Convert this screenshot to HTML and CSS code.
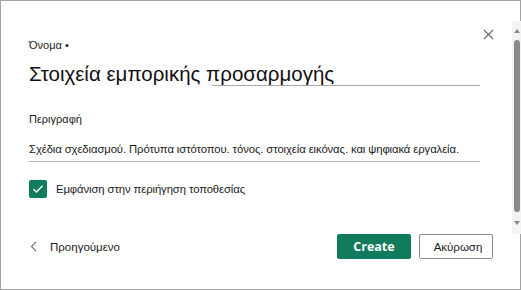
FILE: index.html
```html
<!DOCTYPE html>
<html lang="el">
<head>
  <meta charset="UTF-8">
  <meta name="viewport" content="width=device-width, initial-scale=1.0">
  <title>Στοιχεία εμπορικής προσαρμογής</title>
  <link rel="stylesheet" href="styles.css">
</head>
<body>
  <div class="dialog">
    <!-- Close button -->
    <button class="close" aria-label="Κλείσιμο">
      <svg width="11" height="11" viewBox="0 0 11 11"><path d="M1 1 L10 10 M10 1 L1 10" stroke="#6b6b6b" stroke-width="1.2" fill="none"/></svg>
    </button>

    <!-- Scrollbar -->
    <div class="scrollbar">
      <span class="arrow up"></span>
      <span class="thumb"></span>
      <span class="arrow down"></span>
    </div>

    <div class="content">
      <label class="label">Όνομα •</label>
      <div class="title-field">Στοιχεία εμπορικής προσαρμογής</div>

      <label class="label desc-label">Περιγραφή</label>
      <div class="desc-field">Σχέδια σχεδιασμού. Πρότυπα ιστότοπου. τόνος. στοιχεία εικόνας. και ψηφιακά εργαλεία.</div>

      <div class="check-row">
        <span class="checkbox">
          <svg width="12" height="10" viewBox="0 0 12 10"><path d="M1.5 5.2 L4.5 8 L10.5 1.8" stroke="#fff" stroke-width="1.4" fill="none"/></svg>
        </span>
        <span>Εμφάνιση στην περιήγηση τοποθεσίας</span>
      </div>
    </div>

    <!-- Footer -->
    <div class="footer">
      <a class="back">
        <svg width="8" height="11" viewBox="0 0 8 11"><path d="M6 0.8 L1.5 5.5 L6 10.2" stroke="#6b6b6b" stroke-width="1.1" fill="none"/></svg>
        <span>Προηγούμενο</span>
      </a>
      <div class="actions">
        <button class="btn primary">Create</button>
        <button class="btn secondary">Ακύρωση</button>
      </div>
    </div>
  </div>
</body>
</html>
```

FILE: styles.css
```css
body {
  margin: 0;
  padding: 0;
  background-color: #fff;
  font-family: "Liberation Sans", Arial, sans-serif;
  color: #1b1b1b;
}
.dialog {
  position: relative;
  width: 521px;
  height: 290px;
  box-sizing: border-box;
  border: 1px solid #a3a3a3;
  display: flex;
  flex-direction: column;
}
.close {
  position: absolute;
  top: 27px;
  left: 481px;
  padding: 0;
  border: none;
  background: none;
  width: 13px;
  height: 13px;
  display: flex;
  align-items: center;
  justify-content: center;
}
.scrollbar {
  position: absolute;
  top: 20px;
  left: 511px;
  width: 9px;
  height: 213px;
  background-color: #f3f3f3;
  display: flex;
  flex-direction: column;
  align-items: center;
}
.arrow {
  width: 0;
  height: 0;
  border-left: 3.5px solid transparent;
  border-right: 3.5px solid transparent;
}
.arrow.up {
  margin-top: 8px;
  border-bottom: 4px solid #8a8a8a;
}
.arrow.down {
  margin-top: 9px;
  border-top: 4px solid #8a8a8a;
}
.thumb {
  margin-top: 7px;
  width: 6px;
  height: 172px;
  border-radius: 3px;
  background-color: #8a8a8a;
}
.content {
  padding: 37px 40px 0 28px;
  display: flex;
  flex-direction: column;
}
.label {
  font-size: 11px;
  line-height: 15px;
  color: #222;
}
.title-field {
  margin-top: 8px;
  font-size: 20.5px;
  line-height: 25px;
  color: #111;
  background-image: linear-gradient(to right, transparent 183px, #a9a9a9 183px);
  background-size: 100% 1px;
  background-position: bottom;
  background-repeat: no-repeat;
}
.desc-label {
  margin-top: 26px;
}
.desc-field {
  margin-top: 15px;
  font-size: 11.3px;
  line-height: 14px;
  padding-bottom: 5px;
  border-bottom: 1px solid #b5b5b5;
  white-space: nowrap;
  letter-spacing: -0.1px;
}
.check-row {
  margin-top: 18px;
  display: flex;
  align-items: center;
  gap: 9px;
  font-size: 11.3px;
  letter-spacing: -0.1px;
}
.checkbox {
  width: 18px;
  height: 18px;
  border-radius: 2px;
  background-color: #117b5d;
  display: flex;
  align-items: center;
  justify-content: center;
}
.footer {
  margin-top: auto;
  margin-bottom: 30px;
  padding: 0 27px 0 29px;
  display: flex;
  align-items: center;
  justify-content: space-between;
}
.back {
  display: flex;
  align-items: center;
  gap: 12px;
  font-size: 11.5px;
  color: #1b1b1b;
}
.actions {
  display: flex;
  gap: 8px;
}
.btn {
  width: 74px;
  height: 25px;
  border-radius: 2px;
  font-family: "Open Sans", "Liberation Sans", sans-serif;
  font-size: 12px;
  padding: 0;
}
.primary {
  background-color: #0f7a5c;
  color: #fff;
  border: none;
  font-weight: 700;
  font-size: 12.5px;
}
.secondary {
  background-color: #fff;
  color: #1b1b1b;
  border: 1px solid #8c8c8c;
  font-family: "Liberation Sans", Arial, sans-serif;
  font-size: 11.5px;
  padding-left: 4px;
}
```
